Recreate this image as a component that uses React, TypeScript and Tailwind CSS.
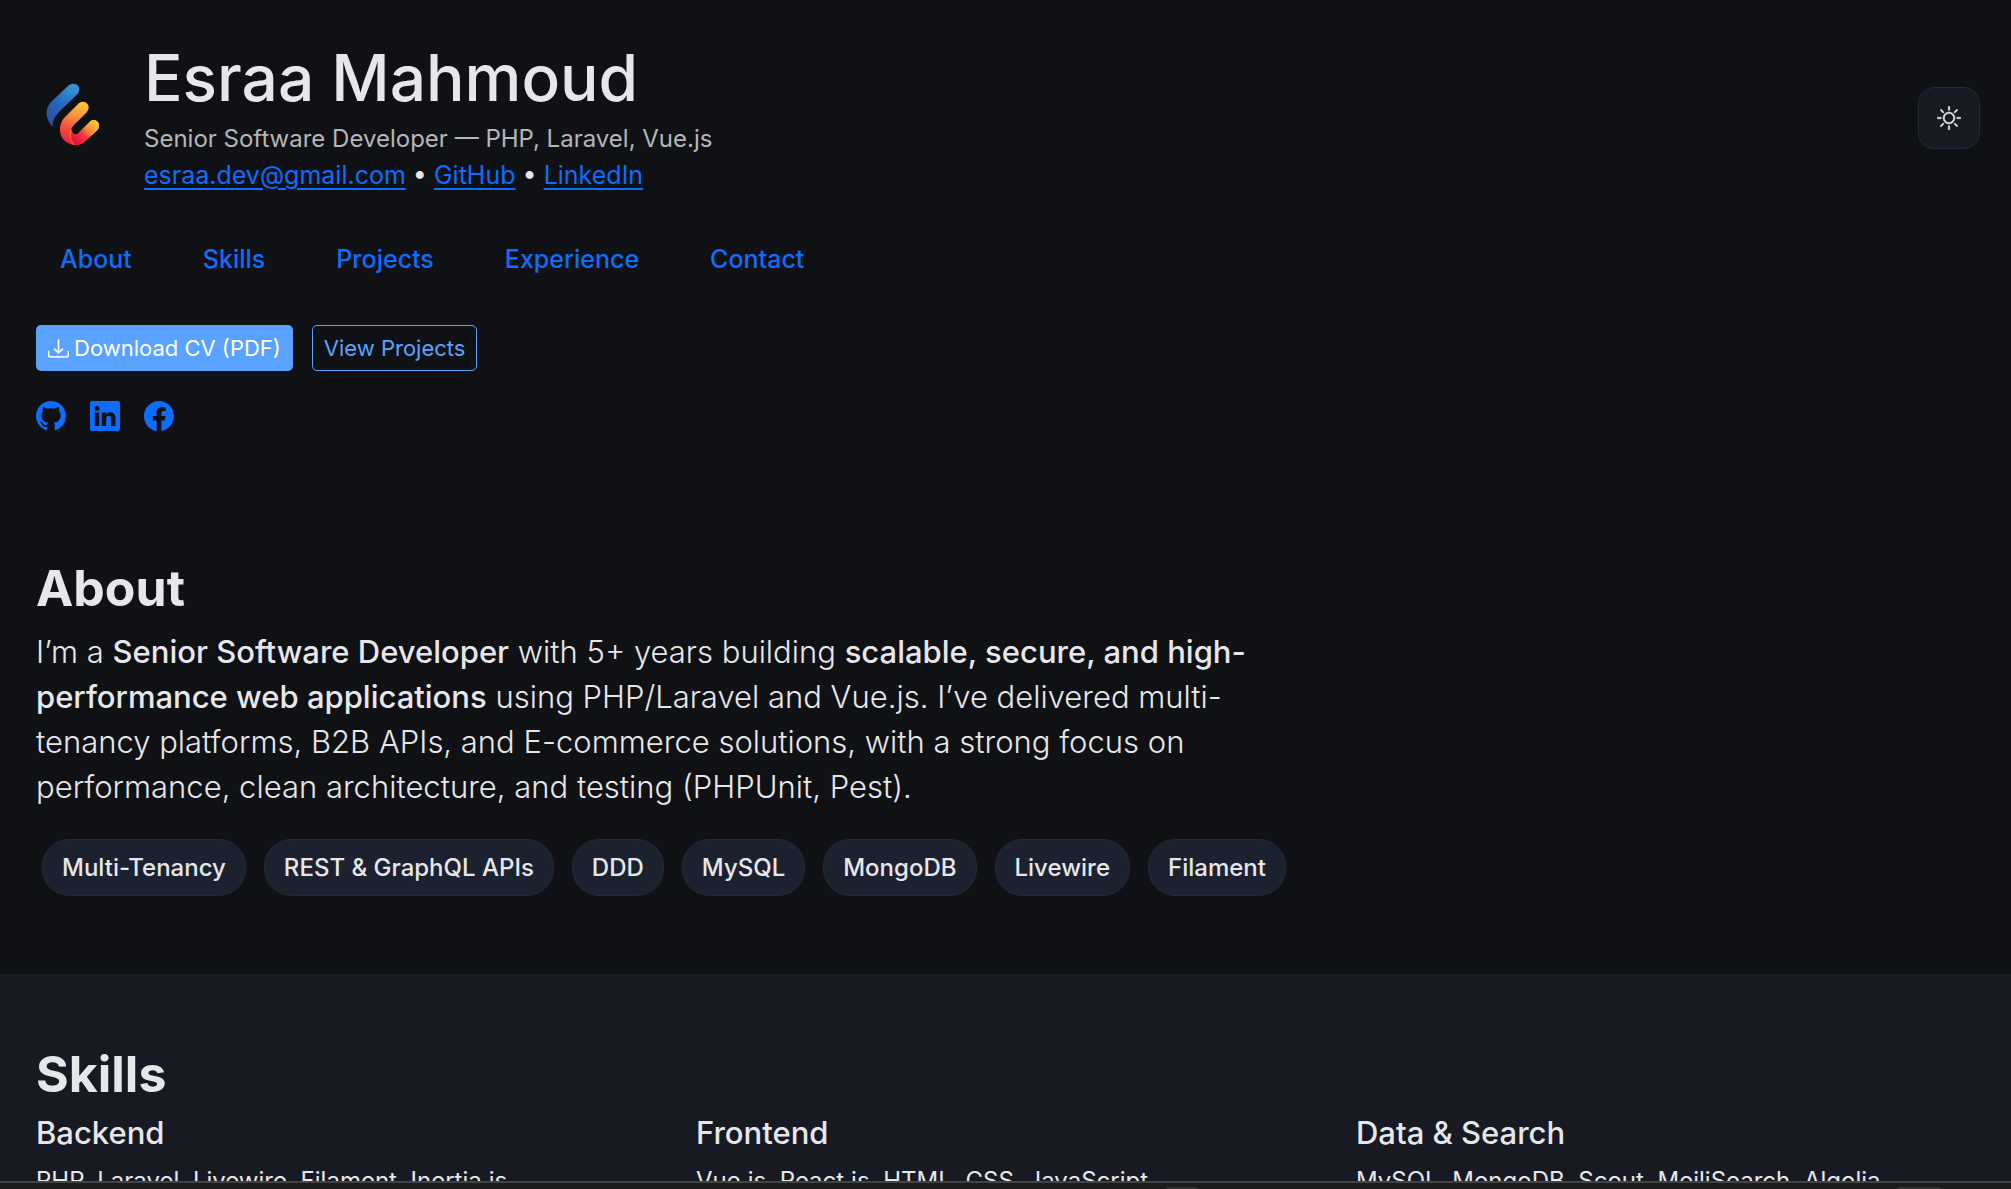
import React from "react";
import {
  BsBrightnessHigh,
  BsDownload,
  BsFacebook,
  BsGithub,
  BsLinkedin,
} from "react-icons/bs";

const navItems = ["About", "Skills", "Projects", "Experience", "Contact"];

const tags = [
  "Multi-Tenancy",
  "REST & GraphQL APIs",
  "DDD",
  "MySQL",
  "MongoDB",
  "Livewire",
  "Filament",
];

const skills = [
  { title: "Backend", items: "PHP, Laravel, Livewire, Filament, Inertia.js" },
  { title: "Frontend", items: "Vue.js, React.js, HTML, CSS, JavaScript" },
  { title: "Data & Search", items: "MySQL, MongoDB, Scout, MeiliSearch, Algolia" },
];

function Logo() {
  return (
    <svg viewBox="6 4 90 90" className="size-[90px] shrink-0" role="img" aria-label="Logo">
      <defs>
        <linearGradient id="blue" x1="0" y1="1" x2="0.7" y2="0">
          <stop offset="0" stopColor="#2f4a9c" />
          <stop offset="0.5" stopColor="#2b5fb4" />
          <stop offset="1" stopColor="#3b8fd6" />
        </linearGradient>
        <linearGradient id="cyan" x1="0" y1="1" x2="1" y2="0">
          <stop offset="0" stopColor="#1565b8" />
          <stop offset="1" stopColor="#1c9bdc" />
        </linearGradient>
        <linearGradient id="warm" gradientUnits="userSpaceOnUse" x1="40" y1="76" x2="54" y2="34">
          <stop offset="0" stopColor="#ec1c40" />
          <stop offset="0.35" stopColor="#f4513c" />
          <stop offset="0.7" stopColor="#f79a3c" />
          <stop offset="1" stopColor="#fbc531" />
        </linearGradient>
        <linearGradient id="arm" gradientUnits="userSpaceOnUse" x1="46" y1="72" x2="66" y2="54">
          <stop offset="0" stopColor="#e8173f" />
          <stop offset="0.35" stopColor="#f0363f" />
          <stop offset="0.6" stopColor="#f7893c" />
          <stop offset="1" stopColor="#fbc531" />
        </linearGradient>
      </defs>
      <path
        d="M22.500 58 C14 48 15 38 23 31 L38.500 16.500 C45 11.500 53 18 47.500 25 L32 40 C26 46 22.500 50 22.500 58 Z"
        fill="url(#blue)"
      />
      <path d="M24 36 L38 22 H43 L29 36 Z" fill="url(#cyan)" />
      <path
        d="M44 76 C29 74 26 57 35 48 L48.500 34.500 C55 29.500 62 36.500 57 43 L44 56 C39 61 41 66 47 65.500 L60 52.500 C66 48 72 55 67.500 61 L56 71.500 C52 75 48 76.500 44 76 Z"
        fill="url(#warm)"
      />
      <path
        d="M44 76 C40 72 40 68 42 60 C42 64 44 66 47 65.500 L60 52.500 C66 48 72 55 67.500 61 L56 71.500 C52 75 48 76.500 44 76 Z"
        fill="url(#arm)"
      />
      <path d="M41.500 61 C39.500 67 40.500 72 44 76" fill="none" stroke="#f98a2b" strokeWidth="0.8" />
    </svg>
  );
}

const link = "text-[#0d6efd] underline underline-offset-4 decoration-2";

export default function App() {
  return (
    <div className="flex h-screen flex-col overflow-hidden bg-[#101114] font-['Inter',sans-serif] text-2xl leading-9 text-[#e6e7eb]">
      <div className="min-h-0 flex-1 overflow-hidden">
        <header className="pr-[31px] pl-9 pt-[43px]">
          <div className="flex items-center justify-between">
            <div className="flex items-center gap-[18px]">
              <Logo />
              <div>
                <h1 className="mb-2 text-[64px] leading-[70px] font-medium">Esraa Mahmoud</h1>
                <p className="text-[#b5b6b9]">Senior Software Developer — PHP, Laravel, Vue.js</p>
                <p className="text-[25px]">
                  <a className={link} href="mailto:esraa.dev@gmail.com">esraa.dev@gmail.com</a>
                  {" • "}
                  <a className={link} href="#github">GitHub</a>
                  {" • "}
                  <a className={link} href="#linkedin">LinkedIn</a>
                </p>
              </div>
            </div>
            <button
              type="button"
              aria-label="Toggle theme"
              className="flex size-[62px] items-center justify-center rounded-2xl border border-[#242735] bg-[#171a23]"
            >
              <BsBrightnessHigh className="size-6 stroke-current [stroke-width:0.3]" />
            </button>
          </div>

          <nav className="mt-12 flex gap-[71px] pl-6 text-[25px] font-medium text-[#0d6efd]">
            {navItems.map((item) => (
              <a key={item} href={`#${item.toLowerCase()}`}>{item}</a>
            ))}
          </nav>

          <div className="mt-12 flex gap-[19px] text-[22px] leading-8">
            <button
              type="button"
              className="flex h-[46px] items-center gap-[5px] rounded-[5px] bg-[#5aa2ff] px-3 text-white"
            >
              <BsDownload className="size-[21px] stroke-current [stroke-width:0.3]" />
              Download CV (PDF)
            </button>
            <button
              type="button"
              className="h-[46px] rounded-[5px] border border-[#5aa2ff] px-[11px] text-[#5aa2ff]"
            >
              View Projects
            </button>
          </div>

          <div className="mt-[30px] flex gap-6 text-[#0d6efd]">
            <a href="#github" aria-label="GitHub"><BsGithub className="size-[30px]" /></a>
            <a href="#linkedin" aria-label="LinkedIn"><BsLinkedin className="size-[30px]" /></a>
            <a href="#facebook" aria-label="Facebook"><BsFacebook className="size-[30px]" /></a>
          </div>
        </header>

        <section id="about" className="px-9 pt-[128px] pb-[78px]">
          <h2 className="text-[50px] leading-[58px] font-bold">About</h2>
          <p className="mt-3 max-w-[1280px] text-[31px] leading-[45px] font-light">
            I’m a <strong className="font-medium">Senior Software Developer</strong> with 5+ years building{" "}
            <strong className="font-medium">
              scalable, secure, and high-
              <br />
              performance web applications
            </strong>{" "}
            using PHP/Laravel and Vue.js. I’ve delivered multi-
            <br />
            tenancy platforms, B2B APIs, and E-commerce solutions, with a strong focus on
            <br />
            performance, clean architecture, and testing (PHPUnit, Pest).
          </p>
          <ul className="mt-[30px] flex flex-wrap gap-[18px] pl-1.5 font-medium">
            {tags.map((tag) => (
              <li
                key={tag}
                className="flex h-[57px] items-center rounded-[27px] border border-[#242735] bg-[#1c212f] px-[19px]"
              >
                {tag}
              </li>
            ))}
          </ul>
        </section>

        <section id="skills" className="bg-[#171a23] pt-[71px] pr-[31px] pb-18 pl-9">
          <h2 className="text-[50px] leading-[58px] font-bold">Skills</h2>
          <div className="mt-3 grid grid-cols-3 gap-9">
            {skills.map((group) => (
              <div key={group.title}>
                <h3 className="text-[31px] leading-9 font-medium">{group.title}</h3>
                <p className="mt-3">{group.items}</p>
              </div>
            ))}
          </div>
        </section>
      </div>
      <div className="flex h-2 shrink-0 items-end border-t-2 border-[#444444] bg-[#1c1c1c]">
        <div className="ml-[58%] h-0.5 w-8 rounded-t bg-[#333333]" />
        <div className="mr-[70px] ml-auto h-0.5 w-11 rounded-t bg-[#333333]" />
      </div>
    </div>
  );
}
